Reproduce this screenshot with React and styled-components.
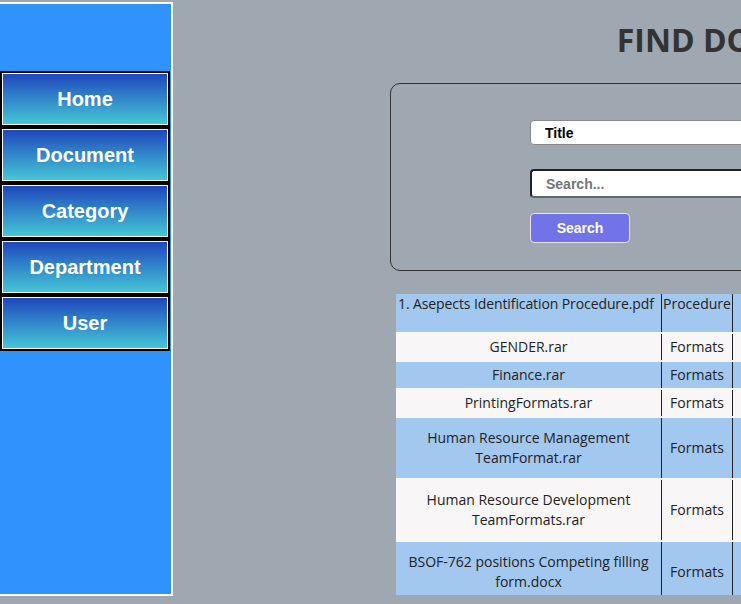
import React from 'react'
import styled, { createGlobalStyle } from 'styled-components'

const GlobalStyle = createGlobalStyle`
  body {
    margin: 0;
    background: #9fa7b0;
    overflow: hidden;
    font-family: "Open Sans", "Liberation Sans", sans-serif;
  }
`

const Shell = styled.div`
  display: flex;
  align-items: flex-start;
  width: max-content;
`

const Sidebar = styled.nav`
  width: 171px;
  height: 523px;
  margin-top: 2px;
  padding-top: 67px;
  background: #3092fc;
  border: 2px solid #fff;
  border-left: none;
  display: flex;
  flex-direction: column;
  flex-shrink: 0;
`

const NavButton = styled.a`
  display: flex;
  align-items: center;
  justify-content: center;
  box-sizing: border-box;
  width: 170px;
  height: 56px;
  border: 2px solid #000;
  box-shadow: inset 0 0 0 1px #fff;
  background: linear-gradient(#1f45bd, #45c9d6);
  color: #fff;
  font: bold 20px "Liberation Sans", Arial, sans-serif;
  text-decoration: none;
`

const Main = styled.main`
  flex-shrink: 0;
  width: 706px;
  margin-left: 217px;
`

const Title = styled.h1`
  margin: 18px 0 22px;
  padding-left: 20px;
  text-align: center;
  font: 700 32px "Open Sans", sans-serif;
  line-height: 43px;
  color: #333;
`

const Panel = styled.section`
  box-sizing: border-box;
  height: 188px;
  border: 1px solid #333;
  border-radius: 10px;
  padding: 36px 0 0 139px;
`

const Form = styled.form`
  display: flex;
  flex-direction: column;
  align-items: flex-start;
  width: 430px;
`

const Select = styled.select`
  appearance: none;
  box-sizing: border-box;
  width: 100%;
  height: 25px;
  margin-bottom: 24px;
  padding: 0 14px;
  background: #fff;
  border: 1px solid #888;
  border-radius: 4px;
  color: #000;
  font: bold 14px "Liberation Sans", Arial, sans-serif;
`

const Input = styled.input`
  box-sizing: border-box;
  width: 100%;
  height: 29px;
  margin-bottom: 15px;
  padding: 0 14px;
  background: #fff;
  border: 2px solid #222;
  border-right-color: #666;
  border-bottom-color: #666;
  border-radius: 4px;
  font: bold 14px "Liberation Sans", Arial, sans-serif;
  &::placeholder { color: #757575; }
`

const Button = styled.button`
  box-sizing: border-box;
  width: 100px;
  height: 30px;
  background: #7373e9;
  border: 1px solid #e4e4f4;
  border-radius: 4px;
  color: #fff;
  font: bold 14px "Liberation Sans", Arial, sans-serif;
`

const TableWrap = styled.div`
  margin: 23px 0 0 6px;
  height: 301px;
  overflow: hidden;
`

const Table = styled.table`
  border-collapse: separate;
  border-spacing: 0 2px;
  margin-top: -2px;
  background: #f8f6f6;
  font-size: 14px;
  color: #222;
`

const Row = styled.tr`
  background: ${p => (p.$blue ? '#a2c8f0' : '#f8f6f6')};
  height: ${p => p.$h}px;
`

const Cell = styled.td`
  padding: 0 ${p => p.$pad ?? 3}px;
  border-right: 1px solid #222;
  text-align: ${p => (p.$left ? 'left' : 'center')};
  vertical-align: ${p => (p.$top ? 'top' : 'middle')};
  white-space: ${p => (p.$left ? 'nowrap' : 'normal')};
  letter-spacing: ${p => (p.$left ? '-0.1px' : 'normal')};
  line-height: 20px;
  width: ${p => p.$w}px;
`

const rows = [
  { name: '1. Asepects Identification Procedure.pdf', cat: 'Procedure', h: 38, top: true },
  { name: 'GENDER.rar', cat: 'Formats', h: 26 },
  { name: 'Finance.rar', cat: 'Formats', h: 26 },
  { name: 'PrintingFormats.rar', cat: 'Formats', h: 26 },
  { name: 'Human Resource Management TeamFormat.rar', cat: 'Formats', h: 60 },
  { name: 'Human Resource Development TeamFormats.rar', cat: 'Formats', h: 60 },
  { name: 'BSOF-762 positions Competing filling form.docx', cat: 'Formats', h: 60 },
]

export default function App() {
  return (
    <>
      <GlobalStyle />
      <Shell>
        <Sidebar>
          {['Home', 'Document', 'Category', 'Department', 'User'].map(l => (
            <NavButton key={l} href="#">{l}</NavButton>
          ))}
        </Sidebar>
        <Main>
          <Title>FIND DOCUMENT</Title>
          <Panel>
            <Form onSubmit={e => e.preventDefault()}>
              <Select defaultValue="title">
                <option value="title">Title</option>
                <option value="category">Category</option>
              </Select>
              <Input placeholder="Search..." />
              <Button type="submit">Search</Button>
            </Form>
          </Panel>
          <TableWrap>
            <Table>
              <tbody>
                {rows.map((r, i) => (
                  <Row key={r.name} $blue={i % 2 === 0} $h={r.h}>
                    <Cell $w={261} $pad={2} $left={r.top} $top={r.top}>{r.name}</Cell>
                    <Cell $w={67} $pad={1} $top={r.top}>{r.cat}</Cell>
                    <Cell $w={220} $top={r.top}>Download</Cell>
                  </Row>
                ))}
              </tbody>
            </Table>
          </TableWrap>
        </Main>
      </Shell>
    </>
  )
}
